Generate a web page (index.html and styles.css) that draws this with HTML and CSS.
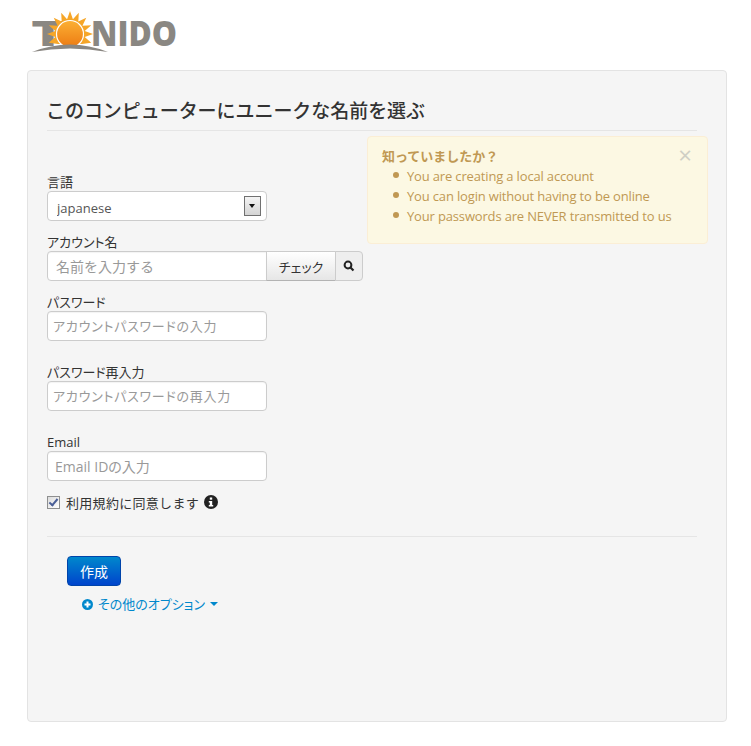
FILE: index.html
```html
<!DOCTYPE html>
<html lang="ja">

<head>
    <meta charset="UTF-8">
    <meta name="viewport" content="width=device-width, initial-scale=1.0">
    <title>Tonido</title>
    <link rel="stylesheet" href="styles.css">
</head>

<body>

    <div class="logo">
        <svg width="160" height="50" viewBox="0 0 160 50">
            <defs>
                <linearGradient id="sun" x1="0" y1="0" x2="0" y2="1">
                    <stop offset="0" stop-color="#fcb034" />
                    <stop offset="1" stop-color="#ec7a12" />
                </linearGradient>
            </defs>
            <text class="logo-text" x="1" y="40" textLength="34" lengthAdjust="spacingAndGlyphs">T</text>
            <path fill="#f6a628" d="M28 38L18.750 36.800 25.290 30.930 17 28 25.290 25.070 18.750 19.200 27.530 19.670 23.740 11.740 31.670 15.530 31.200 6.750 37.070 13.290 40 5 42.930 13.290 48.800 6.750 48.330 15.530 56.260 11.740 52.470 19.670 61.250 19.200 54.710 25.070 63 28 54.710 30.930 61.250 36.800 52 38z" />
            <circle cx="40" cy="28" r="13.500" fill="url(#sun)" stroke="#fff" stroke-width="1.200" />
            <path fill="#fff" d="M20 44Q40 34 60 44V48H20z" />
            <path fill="#8a8782" d="M2 46Q40 31 78 46Q40 39 2 46z" />
            <text class="logo-text" x="61" y="40" textLength="86" lengthAdjust="spacingAndGlyphs">NIDO</text>
        </svg>
    </div>

    <div class="card">
        <h1>このコンピューターにユニークな名前を選ぶ</h1>

        <div class="columns">
            <form class="fields">
                <label class="field-label">言語</label>
                <div class="select-wrap">
                    <select>
                        <option>japanese</option>
                    </select>
                    <span class="select-arrow"></span>
                </div>

                <label class="field-label">アカウント名</label>
                <div class="input-group">
                    <input type="text" class="name-input" placeholder="名前を入力する">
                    <button type="button" class="check-btn">チェック</button>
                    <span class="search-addon">
                        <svg width="12" height="12" viewBox="0 0 12 12">
                            <circle cx="5" cy="5" r="3.400" fill="none" stroke="#222" stroke-width="2" />
                            <path d="M7.500 7.500l3 3" stroke="#222" stroke-width="2.200" />
                        </svg>
                    </span>
                </div>

                <label class="field-label">パスワード</label>
                <input type="password" class="text-input" placeholder="アカウントパスワードの入力">

                <label class="field-label spaced">パスワード再入力</label>
                <input type="password" class="text-input" placeholder="アカウントパスワードの再入力">

                <label class="field-label spaced">Email</label>
                <input type="text" class="text-input wide-hint" placeholder="Email IDの入力">

                <div class="terms">
                    <input type="checkbox" class="terms-check" checked>
                    <span>利用規約に同意します</span>
                    <svg width="14" height="14" viewBox="0 0 14 14">
                        <circle cx="7" cy="7" r="7" fill="#222" />
                        <rect x="5.800" y="2.500" width="2.400" height="2.200" fill="#fff" />
                        <path fill="#fff" d="M4.800 6h3.400v4h1v1.500H4.800V10h1V7.500h-1z" />
                    </svg>
                </div>
            </form>

            <div class="alert">
                <span class="alert-close">×</span>
                <h4>知っていましたか？</h4>
                <ul>
                    <li>You are creating a local account</li>
                    <li>You can login without having to be online</li>
                    <li>Your passwords are NEVER transmitted to us</li>
                </ul>
            </div>
        </div>

        <hr>

        <div class="actions">
            <button type="button" class="create-btn">作成</button>
            <a class="more-link" href="#">
                <svg width="11" height="11" viewBox="0 0 11 11">
                    <circle cx="5.500" cy="5.500" r="5.500" fill="#0088cc" />
                    <path fill="#fff" d="M4.500 2.500h2v2h2v2h-2v2h-2v-2h-2v-2h2z" />
                </svg>
                <span>その他のオプション</span>
                <span class="caret"></span>
            </a>
        </div>
    </div>

</body>

</html>
```

FILE: styles.css
```css
body {
    font-family: "Open Sans", "Noto Sans CJK JP", sans-serif;
    font-size: 13px;
    margin: 0;
    padding: 0;
    background-color: #fff;
    color: #333;
}

.logo {
    height: 70px;
    padding: 6px 0 0 30px;
    box-sizing: border-box;
}

.logo svg {
    display: block;
}

.logo-text {
    font-family: "Open Sans", sans-serif;
    font-weight: 800;
    font-size: 35px;
    fill: #8a8782;
}

.card {
    box-sizing: border-box;
    width: 700px;
    height: 652px;
    margin-left: 27px;
    padding: 26px 29px 0 19px;
    background-color: #f5f5f5;
    border: 1px solid #e3e3e3;
    border-radius: 4px;
}

h1 {
    margin: 0;
    padding-bottom: 4px;
    font-size: 19px;
    line-height: 29px;
    font-weight: 500;
    letter-spacing: -0.05px;
    text-indent: -1px;
    color: #333;
    border-bottom: 1px solid #e5e5e5;
}

.columns {
    display: flex;
    gap: 4px;
    height: 405px;
}

.fields {
    display: flex;
    flex: none;
    flex-direction: column;
    align-items: flex-start;
    width: 316px;
    padding-top: 42px;
}

.field-label {
    flex: none;
    height: 18px;
    line-height: 18px;
    color: #333;
    font-feature-settings: "palt";
}

.select-wrap {
    position: relative;
    flex: none;
    margin-bottom: 12px;
}

select {
    display: block;
    appearance: none;
    box-sizing: border-box;
    width: 220px;
    height: 30px;
    padding: 3px 9px 0;
    font: inherit;
    color: #555;
    background-color: #fff;
    border: 1px solid #ccc;
    border-radius: 4px;
}

.select-arrow {
    position: absolute;
    top: 5px;
    right: 6px;
    box-sizing: border-box;
    width: 17px;
    height: 20px;
    border: 1px solid #707070;
    background: linear-gradient(#f4f4f4, #d4d4d4);
}

.select-arrow::after {
    content: "";
    position: absolute;
    top: 7px;
    left: 4px;
    border-top: 4px solid #111;
    border-left: 3.500px solid transparent;
    border-right: 3.500px solid transparent;
}

.input-group {
    display: flex;
    flex: none;
    margin-bottom: 12px;
}

input::placeholder {
    color: #999;
    opacity: 1;
}

.name-input,
.text-input {
    flex: none;
    box-sizing: border-box;
    width: 220px;
    height: 30px;
    padding: 0 5px;
    font: inherit;
    color: #555;
    background-color: #fff;
    border: 1px solid #ccc;
    border-radius: 4px;
    box-shadow: inset 0 1px 1px rgba(0, 0, 0, 0.05);
    font-feature-settings: "palt";
    letter-spacing: 0.75px;
}

.name-input {
    padding: 0 8px;
    font-size: 14px;
    border-radius: 4px 0 0 4px;
    font-feature-settings: normal;
    letter-spacing: 0;
}

.wide-hint {
    padding: 0 7px;
    font-size: 14px;
    letter-spacing: 0;
}

.check-btn {
    box-sizing: border-box;
    width: 70px;
    height: 30px;
    margin-left: -1px;
    padding: 0;
    font: inherit;
    color: #333;
    background: linear-gradient(#fff, #e6e6e6);
    border: 1px solid #ccc;
    border-bottom-color: #b3b3b3;
    font-feature-settings: "palt";
}

.search-addon {
    display: flex;
    align-items: center;
    justify-content: center;
    box-sizing: border-box;
    width: 28px;
    height: 30px;
    margin-left: -1px;
    background-color: #eee;
    border: 1px solid #ccc;
    border-radius: 0 4px 4px 0;
}

.text-input {
    margin-bottom: 12px;
}

.spaced {
    margin-top: 10px;
}

.terms {
    display: flex;
    flex: none;
    align-items: center;
    gap: 6px;
    height: 18px;
    letter-spacing: 0.3px;
    color: #333;
}

.terms svg {
    margin-left: -1px;
}

.terms-check {
    appearance: none;
    position: relative;
    box-sizing: border-box;
    width: 13px;
    height: 13px;
    margin: 0;
    border: 1px solid #8e8f8f;
    background: linear-gradient(135deg, #dcdcdc, #fff);
}

.terms-check::after {
    content: "";
    position: absolute;
    left: 3px;
    top: 0;
    width: 3px;
    height: 7px;
    border: solid #4a5f97;
    border-width: 0 2px 2px 0;
    transform: rotate(40deg);
}

.alert {
    box-sizing: border-box;
    position: relative;
    flex: none;
    width: 341px;
    height: 108px;
    margin-top: 5px;
    padding: 11px 14px;
    color: #c09853;
    background-color: #fcf8e3;
    border: 1px solid #fbeed5;
    border-radius: 4px;
}

.alert h4 {
    margin: 0;
    font-size: 13px;
    line-height: 16px;
    font-weight: 700;
}

.alert ul {
    margin: 2px 0 0;
    padding-left: 25px;
    list-style: none;
}

.alert li {
    position: relative;
    line-height: 20px;
    letter-spacing: -0.16px;
}

.alert li::before {
    content: "";
    position: absolute;
    left: -14px;
    top: 6px;
    width: 6px;
    height: 6px;
    border-radius: 50%;
    background-color: #c09853;
}

.alert-close {
    position: absolute;
    top: 5px;
    right: 15px;
    font-size: 24px;
    line-height: 26px;
    font-weight: 400;
    color: #cfcfc5;
}

hr {
    margin: 0;
    border: 0;
    border-top: 1px solid #e5e5e5;
}

.actions {
    display: flex;
    flex-direction: column;
    align-items: flex-start;
    padding: 19px 0 0 20px;
}

.create-btn {
    box-sizing: border-box;
    width: 54px;
    height: 30px;
    padding: 0;
    font: inherit;
    font-size: 14px;
    color: #fff;
    background: linear-gradient(#0088cc, #0044cc);
    border: 1px solid #0044aa;
    border-radius: 4px;
}

.more-link {
    display: flex;
    align-items: center;
    gap: 5px;
    margin: 9px 0 0 15px;
    line-height: 18px;
    color: #0088cc;
    text-decoration: none;
    font-feature-settings: "palt";
}

.caret {
    border-top: 4px solid #0088cc;
    border-left: 4px solid transparent;
    border-right: 4px solid transparent;
}
```
